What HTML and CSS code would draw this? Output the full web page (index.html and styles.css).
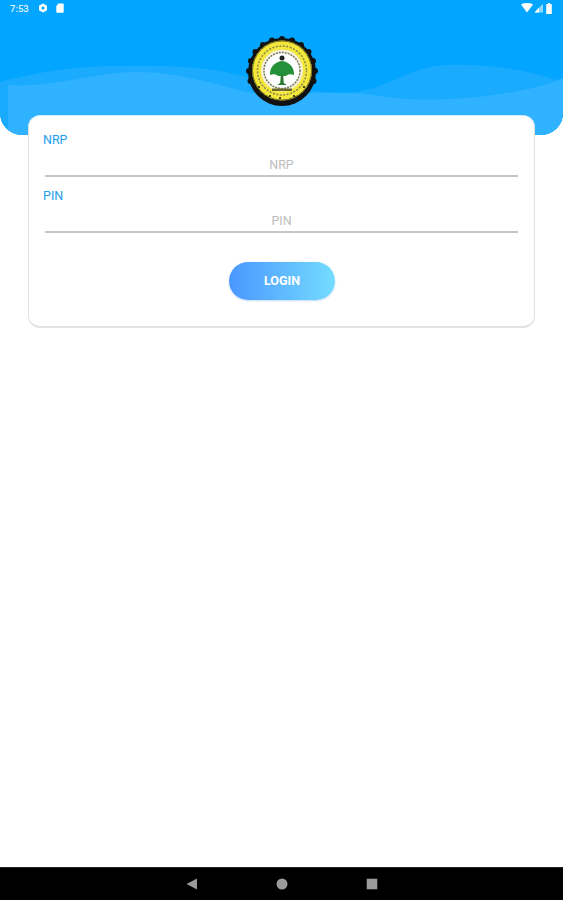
FILE: index.html
```html
<!DOCTYPE html>
<html lang="en">
<head>
	<meta charset="UTF-8">
	<title>Login</title>
	<link rel="stylesheet" href="styles.css">
</head>
<body>
	<div class="page">
		<div class="head">
			<svg class="waves" viewBox="0 0 563 135" preserveAspectRatio="none">
				<path fill="#1aabff" d="M0 82 C30 74 65 67 110 66 C160 65 195 66 225 72 C265 80 300 93 346 93 C385 92 405 67 446 65 C485 63 530 70 563 82 V135 H0 Z"/>
				<path fill="#2fb2ff" d="M8 85 C50 88 85 74 133 72 C175 71 215 84 247 92 C280 98 335 88 380 96 C415 102 470 100 513 92 C535 88 550 84 563 78 V135 H8 Z"/>
			</svg>
			<div class="status">
				<span class="time">7:53</span>
				<svg class="ico" viewBox="0 0 10 10"><path fill="#fff" fill-rule="evenodd" d="M5 .4 9 2.7v4.6L5 9.6 1 7.3V2.7ZM5 3.4a1.6 1.6 0 1 0 0 3.2 1.6 1.6 0 0 0 0-3.2Z"/></svg>
				<svg class="ico sd" viewBox="0 0 8 10"><path fill="#fff" d="M2.5.5H7a.7.7 0 0 1 .7.7v7.9a.7.7 0 0 1-.7.7H1a.7.7 0 0 1-.7-.7V3Z"/></svg>
				<span class="grow"></span>
				<svg class="ico wifi" viewBox="0 0 12 10"><path fill="#fff" d="M0 1.6C3.400-.7 8.600-.7 12 1.600L6 9.500Z"/></svg>
				<svg class="ico signal" viewBox="0 0 9 10"><path fill="#fff" opacity=".55" d="M9 .8V9.500H.5Z"/><path fill="#fff" d="M5 4.700V9.500H.5Z"/></svg>
				<svg class="ico batt" viewBox="0 0 6 11"><path fill="#fff" d="M2 0h2v1h1.200a.6.6 0 0 1 .6.6v8.800a.6.6 0 0 1-.6.6H.8a.6.6 0 0 1-.6-.6V1.600A.6.6 0 0 1 .8 1H2Z"/></svg>
			</div>
			<svg class="logo" viewBox="0 0 72 72">
				<circle cx="36" cy="36" r="34" fill="#111"/>
				<g fill="#111">
					<circle cx="36" cy="3" r="3"/><circle cx="46" cy="4.500" r="3"/><circle cx="55" cy="9" r="3"/><circle cx="62.500" cy="16" r="3"/>
					<circle cx="67" cy="25" r="3"/><circle cx="69" cy="35" r="3"/><circle cx="67.500" cy="45" r="3"/><circle cx="26" cy="4.500" r="3"/>
					<circle cx="17" cy="9" r="3"/><circle cx="9.500" cy="16" r="3"/><circle cx="5" cy="25" r="3"/><circle cx="3" cy="35" r="3"/><circle cx="4.500" cy="45" r="3"/>
				</g>
				<circle cx="36" cy="34.500" r="30" fill="#f3e73a"/>
				<circle cx="36" cy="34.500" r="29.500" fill="none" stroke="#6d6a22" stroke-width="1"/>
				<circle cx="36" cy="34.500" r="24.500" fill="none" stroke="#8b8752" stroke-width="1.500" stroke-dasharray="2 1.500"/>
				<circle cx="36" cy="34.500" r="21" fill="#f4f1d8"/>
				<circle cx="36" cy="34.500" r="18" fill="#fff" stroke="#77785a" stroke-width="1.500" stroke-dasharray="2 1"/>
				<circle cx="36" cy="22" r="2.500" fill="#222"/>
				<path fill="#24903a" d="M36 25C28 26 23.500 32 24 39 27 38 30 38 32 40H40C42 38 45 38 48 39 48.500 32 44 26 36 25Z"/>
				<path fill="#2d7a35" d="M34.800 39h2.400l.6 8 3 2H31.200l3-2Z"/>
				<path fill="#6b6a2c" d="M26 52.500h20V55H26Z"/>
				<g fill="#111">
					<circle cx="13" cy="51" r="1"/><circle cx="58" cy="51" r="1"/><circle cx="24" cy="60" r="1"/><circle cx="48" cy="60" r="1"/><circle cx="34" cy="62" r="1"/>
				</g>
			</svg>
		</div>

		<div class="card">
			<label class="lbl">NRP</label>
			<div class="inp">NRP</div>
			<label class="lbl">PIN</label>
			<div class="inp">PIN</div>
			<div class="btn-row">
				<a class="btn">LOGIN</a>
			</div>
		</div>

		<div class="grow"></div>

		<div class="nav">
			<svg class="nav-ico" viewBox="0 0 12 12"><path fill="#9b9b9b" d="M11 .5V11.500L.5 6Z"/></svg>
			<svg class="nav-ico" viewBox="0 0 12 12"><circle cx="6" cy="6" r="5.500" fill="#9b9b9b"/></svg>
			<svg class="nav-ico" viewBox="0 0 12 12"><path fill="#9b9b9b" d="M.7.7h10.600v10.600H.7Z"/></svg>
		</div>
	</div>
</body>
</html>
```

FILE: styles.css
```css
*{ box-sizing: border-box;}
body{ margin: 0; font-family: Roboto, "Liberation Sans", sans-serif; background: #fff;}
.page{ display: flex; flex-direction: column; height: 900px; overflow: hidden;}
.grow{ flex: 1;}

.head{ position: relative; flex: none; height: 135px; background: #02a5ff; border-radius: 0 0 22px 22px; overflow: hidden;}
.waves{ position: absolute; left: 0; top: 0; width: 100%; height: 100%;}
.status{ position: relative; display: flex; align-items: center; height: 16px; padding: 0 10px 0 10px;}
.time{ width: 19px; font-size: 9.500px; font-weight: 500; color: #e4f4ff;}
.ico{ display: block; height: 10px; width: 10px;}
.ico:nth-child(2){ margin-left: 9px;}
.sd{ width: 8px; margin-left: 8px;}
.wifi{ width: 12px; margin-right: 1px;}
.signal{ width: 9px; margin-right: 3px;}
.batt{ width: 6px; height: 11px; margin-right: 1px;}
.logo{ position: relative; display: block; width: 72px; height: 72px; margin: 20px auto 0; filter: blur(.4px);}

.card{ position: relative; flex: none; margin: -20px 28px 0; height: 213px; padding: 14px 16px 0 14px; background: #fff; border: 1px solid #e2e2e2; border-top-color: #cdebff; border-bottom-width: 2px; border-radius: 12px;}
.lbl{ display: block; height: 20px; line-height: 20px; font-size: 12.500px; color: #1e9df0;}
.inp{ height: 27px; margin: 0 0 9px 2px; padding-top: 4px; line-height: 22px; font-size: 12.500px; text-align: center; color: #bdbdbd; border-bottom: 2px solid #c6c6c6;}
.btn-row{ display: flex; justify-content: center; margin-top: 29px; padding-left: 3px;}
.btn{ display: block; width: 106px; height: 38px; line-height: 38px; font-size: 12.500px; font-weight: 700; text-align: center; color: #fff; border-radius: 19px; background: linear-gradient(to right, #4a97ff, #74dcff); box-shadow: 0 1px 2px rgba(80,130,220,.3);}

.nav{ flex: none; display: flex; justify-content: center; align-items: center; gap: 78px; height: 33px; background: #000; border-top: 1px solid #222;}
.nav-ico{ display: block; width: 12px; height: 12px;}
```
